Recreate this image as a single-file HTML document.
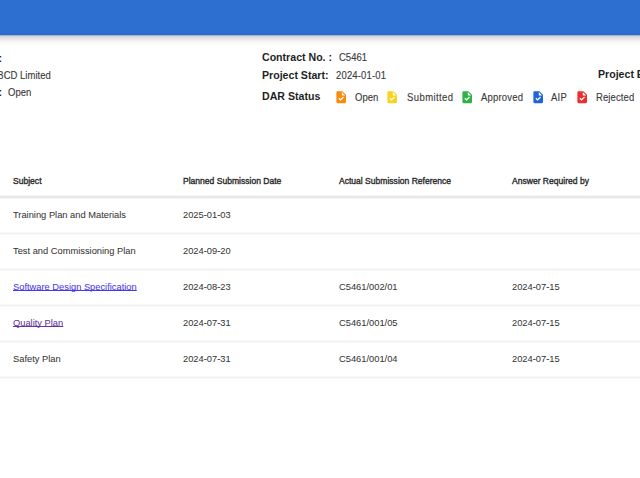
<!DOCTYPE html>
<html><head><meta charset="utf-8">
<style>
html,body{margin:0;padding:0;width:640px;height:478px;overflow:hidden;background:#fff;font-family:"Liberation Sans",sans-serif;color:#333;}
.t{position:absolute;white-space:nowrap;line-height:1;}
#hdr{position:absolute;left:-10px;top:0;width:660px;height:35px;background:#2c6fd1;box-shadow:0 3px 7px rgba(50,25,10,0.27);}
.b{font-weight:bold;color:#1f1f1f;font-size:10.6px;}
.v{font-size:10.4px;color:#3a3a3a;-webkit-text-stroke:0.12px #3a3a3a;transform:scaleX(.915);transform-origin:0 0;}
.ic{position:absolute;width:14.4px;height:14.4px;}
.th{font-weight:normal;font-size:9.2px;color:#2b2b2b;-webkit-text-stroke:0.38px #2b2b2b;transform:scaleX(.93);transform-origin:0 0;}
.td{font-size:9.5px;color:#363636;-webkit-text-stroke:0.05px #363636;transform:scaleX(.98);transform-origin:0 0;}
.ln{position:absolute;left:0;width:640px;height:3px;background:linear-gradient(#f9f9f9 0,#f9f9f9 33.3%,#efefef 33.3%,#efefef 66.7%,#f9f9f9 66.7%);}
.hl{position:absolute;left:0;width:640px;height:4px;background:linear-gradient(#f6f6f6 0,#f6f6f6 25%,#e8e8e8 25%,#e8e8e8 75%,#f6f6f6 75%);}
a{color:#4a38e6;-webkit-text-stroke-color:#4a38e6;text-underline-offset:0.3px;text-decoration-skip-ink:none;text-decoration-thickness:1px;}
a.vis{color:#66339a;-webkit-text-stroke-color:#66339a;}
</style></head><body>
<div id="hdr"></div>
<div style="position:absolute;left:0;top:33px;width:640px;height:1px;background:#246bcf;"></div>
<div style="position:absolute;left:0;top:35px;width:640px;height:1px;background:rgba(44,111,209,0.3);"></div>

<!-- left info column (cut off) -->
<div class="t b" style="left:-1.5px;top:52.5px;">:</div>
<div class="t v" style="left:-9px;top:70.5px;">ABCD Limited</div>
<div class="t b" style="left:-1.5px;top:86.5px;">:</div>
<div class="t v" style="left:8px;top:88px;">Open</div>

<!-- middle info -->
<div class="t b" style="left:262px;top:52px;">Contract No. :</div>
<div class="t v" style="left:339px;top:53px;">C5461</div>
<div class="t b" style="left:262px;top:70px;">Project Start:</div>
<div class="t v" style="left:336px;top:70.5px;letter-spacing:0.17px;">2024-01-01</div>
<div class="t b" style="left:598px;top:69px;">Project End:</div>
<div class="t b" style="left:262px;top:91px;">DAR Status</div>

<svg class="ic" style="left:333.9px;top:90.4px;" viewBox="0 0 24 24"><path fill="#f98b0b" d="M14 2H6c-1.1 0-1.99.9-1.99 2L4 20c0 1.1.89 2 1.99 2H18c1.1 0 2-.9 2-2V8l-6-6zm-3.06 16L7.4 14.46l1.41-1.41 2.12 2.12 4.24-4.24 1.41 1.41L10.94 18zM13 9V3.5L18.5 9H13z"/></svg>
<div class="t v" style="left:355px;top:92.7px;">Open</div>
<svg class="ic" style="left:385.3px;top:90.4px;" viewBox="0 0 24 24"><path fill="#f9d21c" d="M14 2H6c-1.1 0-1.99.9-1.99 2L4 20c0 1.1.89 2 1.99 2H18c1.1 0 2-.9 2-2V8l-6-6zm-3.06 16L7.4 14.46l1.41-1.41 2.12 2.12 4.24-4.24 1.41 1.41L10.94 18zM13 9V3.5L18.5 9H13z"/></svg>
<div class="t v" style="left:406.5px;top:92.7px;letter-spacing:0.45px;">Submitted</div>
<svg class="ic" style="left:459.8px;top:90.4px;" viewBox="0 0 24 24"><path fill="#2fb148" d="M14 2H6c-1.1 0-1.99.9-1.99 2L4 20c0 1.1.89 2 1.99 2H18c1.1 0 2-.9 2-2V8l-6-6zm-3.06 16L7.4 14.46l1.41-1.41 2.12 2.12 4.24-4.24 1.41 1.41L10.94 18zM13 9V3.5L18.5 9H13z"/></svg>
<div class="t v" style="left:481px;top:92.7px;letter-spacing:0.2px;">Approved</div>
<svg class="ic" style="left:530.8px;top:90.4px;" viewBox="0 0 24 24"><path fill="#1f64d8" d="M14 2H6c-1.1 0-1.99.9-1.99 2L4 20c0 1.1.89 2 1.99 2H18c1.1 0 2-.9 2-2V8l-6-6zm-3.06 16L7.4 14.46l1.41-1.41 2.12 2.12 4.24-4.24 1.41 1.41L10.94 18zM13 9V3.5L18.5 9H13z"/></svg>
<div class="t v" style="left:551px;top:92.7px;letter-spacing:0.3px;">AIP</div>
<svg class="ic" style="left:574.8px;top:90.4px;" viewBox="0 0 24 24"><path fill="#ee2e2e" d="M14 2H6c-1.1 0-1.99.9-1.99 2L4 20c0 1.1.89 2 1.99 2H18c1.1 0 2-.9 2-2V8l-6-6zm-3.06 16L7.4 14.46l1.41-1.41 2.12 2.12 4.24-4.24 1.41 1.41L10.94 18zM13 9V3.5L18.5 9H13z"/></svg>
<div class="t v" style="left:595.5px;top:92.7px;letter-spacing:0.1px;">Rejected</div>

<!-- table -->
<div class="t th" style="left:13px;top:176.5px;">Subject</div>
<div class="t th" style="left:183px;top:176.5px;">Planned Submission Date</div>
<div class="t th" style="left:339px;top:176.5px;">Actual Submission Reference</div>
<div class="t th" style="left:512px;top:176.5px;">Answer Required by</div>
<div class="hl" style="top:195px;"></div>

<div class="t td" style="left:13px;top:210px;">Training Plan and Materials</div>
<div class="t td" style="left:183px;top:210px;">2025-01-03</div>
<div class="ln" style="top:232px;"></div>

<div class="t td" style="left:13px;top:246px;">Test and Commissioning Plan</div>
<div class="t td" style="left:183px;top:246px;">2024-09-20</div>
<div class="ln" style="top:268px;"></div>

<div class="t td" style="left:13px;top:281.5px;"><a href="#">Software Design Specification</a></div>
<div class="t td" style="left:183px;top:282px;">2024-08-23</div>
<div class="t td" style="left:339px;top:282px;">C5461/002/01</div>
<div class="t td" style="left:512px;top:282px;">2024-07-15</div>
<div class="ln" style="top:304px;"></div>

<div class="t td" style="left:13px;top:317.5px;"><a class="vis" href="#">Quality Plan</a></div>
<div class="t td" style="left:183px;top:318px;">2024-07-31</div>
<div class="t td" style="left:339px;top:318px;">C5461/001/05</div>
<div class="t td" style="left:512px;top:318px;">2024-07-15</div>
<div class="ln" style="top:340px;"></div>

<div class="t td" style="left:13px;top:354px;">Safety Plan</div>
<div class="t td" style="left:183px;top:354px;">2024-07-31</div>
<div class="t td" style="left:339px;top:354px;">C5461/001/04</div>
<div class="t td" style="left:512px;top:354px;">2024-07-15</div>
<div class="ln" style="top:376px;"></div>

</body></html>
